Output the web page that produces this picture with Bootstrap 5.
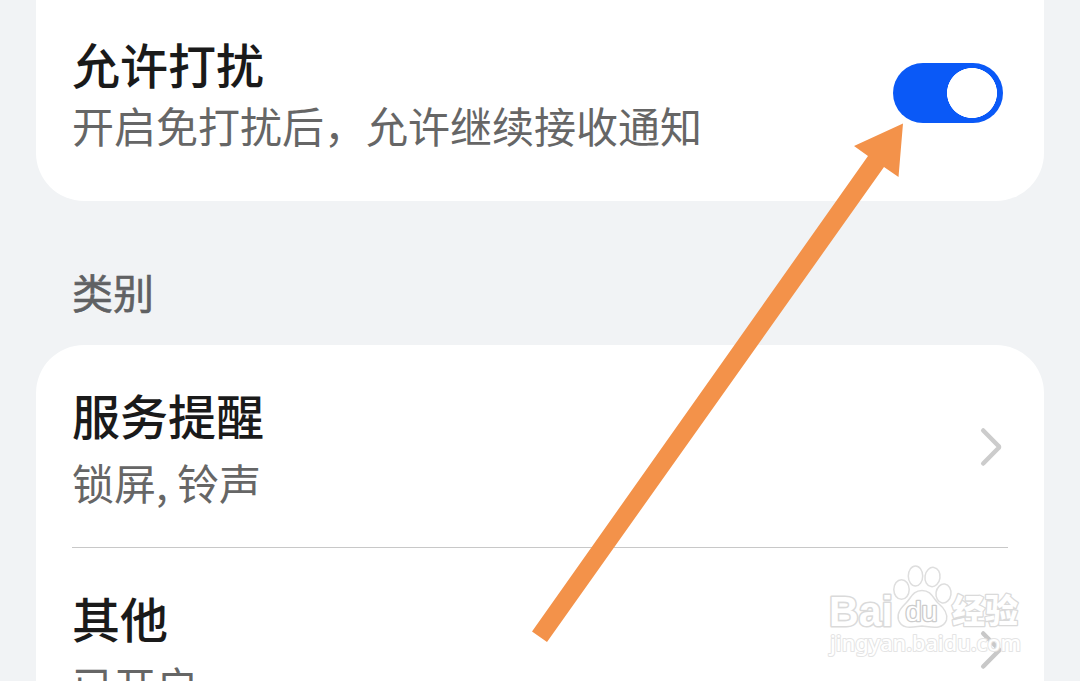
<!DOCTYPE html>
<html lang="zh-CN">
<head>
    <meta charset="UTF-8">
    <meta name="viewport" content="width=device-width, initial-scale=1.0">
    <title>通知设置</title>
    <link href="https://cdn.jsdelivr.net/npm/bootstrap@5.3.0/dist/css/bootstrap.min.css" rel="stylesheet">
    <style>
        body {
            background-color: #f1f3f5;
            font-family: "Noto Sans CJK SC", sans-serif;
            height: 681px;
            overflow: hidden;
        }
        .settings-page {
            height: 681px;
            padding: 0 36px;
        }
        .panel {
            border-radius: 48px;
            padding: 0 36px;
        }
        .panel-top {
            height: 201px;
            border-top-left-radius: 0;
            border-top-right-radius: 0;
            padding-top: 31px;
        }
        .panel-top .item-note {
            margin-top: 2px;
        }
        .panel-list {
            height: 420px;
        }
        .item-title {
            font-size: 48px;
            line-height: 64px;
            font-weight: 500;
            color: #1a1a1a;
        }
        .item-note {
            font-size: 42px;
            line-height: 56px;
            color: #666;
        }
        .category {
            height: 144px;
            padding: 62px 36px 0;
            font-size: 41px;
            line-height: 56px;
            color: #606163;
            -webkit-text-stroke: .6px #606163;
        }
        .setting-row {
            height: 203px;
            padding-top: 37px;
        }
        .setting-row .item-note {
            margin-top: 8px;
        }
        .setting-row:first-child {
            border-bottom: 1px solid #c8c8c8;
        }
        .chevron {
            margin: 44px 5px 0 0;
        }
        .form-switch .form-check-input.toggle {
            width: 110px;
            height: 60px;
            margin: 32px 5px 0 0;
            border: 0;
            background-color: #0a59f7;
            background-size: 66px 66px;
            background-position: right -2px center;
            background-image: radial-gradient(circle, #fff 24.7px, transparent 25.3px);
            background-repeat: no-repeat;
        }
    </style>
</head>
<body>
<div class="settings-page position-relative overflow-hidden">
    <section class="panel panel-top bg-white d-flex justify-content-between">
        <div class="text-nowrap">
            <div class="item-title">允许打扰</div>
            <div class="item-note">开启免打扰后，允许继续接收通知</div>
        </div>
        <div class="form-switch p-0">
            <input class="form-check-input toggle" type="checkbox" role="switch" aria-label="允许打扰" checked>
        </div>
    </section>

    <div class="category">类别</div>

    <section class="panel panel-list bg-white">
        <div class="setting-row d-flex justify-content-between">
            <div>
                <div class="item-title">服务提醒</div>
                <div class="item-note">锁屏, 铃声</div>
            </div>
            <svg class="chevron" width="24" height="42" viewBox="0 0 24 42" fill="none" stroke="#ccc" stroke-width="4.5" stroke-linecap="round" stroke-linejoin="round"><path d="M4.2 4.5 L19.5 20 Q20.6 21 19.5 22 L4.2 37.5"/></svg>
        </div>
        <div class="setting-row d-flex justify-content-between">
            <div>
                <div class="item-title">其他</div>
                <div class="item-note">已开启</div>
            </div>
            <svg class="chevron" width="24" height="42" viewBox="0 0 24 42" fill="none" stroke="#c8c8c8" stroke-width="4.5" stroke-linecap="round" stroke-linejoin="round"><path d="M4.2 4.5 L19.5 20 Q20.6 21 19.5 22 L4.2 37.5"/></svg>
        </div>
    </section>

    <!-- Arrow and watermark over the page -->
    <svg class="position-absolute top-0 start-0 pe-none" width="1080" height="681" viewBox="0 0 1080 681">
        <polygon points="903,123.5 854,146 868,156 532,631.5 547,642 884,167 898.5,177" fill="#f3924a"/>
        <g fill="#fff" stroke="#dedede" stroke-width="1.5" stroke-linejoin="round">
            <text x="829" y="625.500" font-family="Liberation Sans, sans-serif" font-weight="700" font-size="43" textLength="64" lengthAdjust="spacingAndGlyphs" stroke="#dadada" stroke-width="3.2" paint-order="stroke">Bai</text>
            <ellipse cx="901.5" cy="589.5" rx="7.7" ry="9.8"/>
            <ellipse cx="915.5" cy="576" rx="7.2" ry="10"/>
            <ellipse cx="932.5" cy="577" rx="7.5" ry="9.7" transform="rotate(8 932.5 577)"/>
            <ellipse cx="943.5" cy="593.5" rx="7.5" ry="9.5" transform="rotate(8 943.5 593.5)"/>
            <path d="M922 590.5 C931 590.5 933 598 938 603 C944 608 948 614 946.5 620 C943 630 932 627 922 626 C912 627 902 630 898.5 620 C896.5 613 901 608 906 603 C911 598 913 590.5 922 590.5 Z"/>
            <text x="905.5" y="620.500" font-family="Liberation Sans, sans-serif" font-weight="400" font-size="27" textLength="32" lengthAdjust="spacingAndGlyphs" stroke="#ccc" stroke-width="2.6" paint-order="stroke">du</text>
            <text x="952" y="623" font-family="Noto Sans CJK SC, sans-serif" font-weight="900" font-size="33" textLength="66" lengthAdjust="spacingAndGlyphs" stroke="#dadada" stroke-width="2.6" paint-order="stroke">经验</text>
            <text x="830" y="651" font-family="Noto Sans, sans-serif" font-weight="500" font-size="22" textLength="191" lengthAdjust="spacingAndGlyphs" stroke="#e4e4e4" stroke-width="2" paint-order="stroke">jingyan.baidu.com</text>
        </g>
    </svg>
</div>
<script src="https://cdn.jsdelivr.net/npm/bootstrap@5.3.0/dist/js/bootstrap.bundle.min.js"></script>
</body>
</html>
